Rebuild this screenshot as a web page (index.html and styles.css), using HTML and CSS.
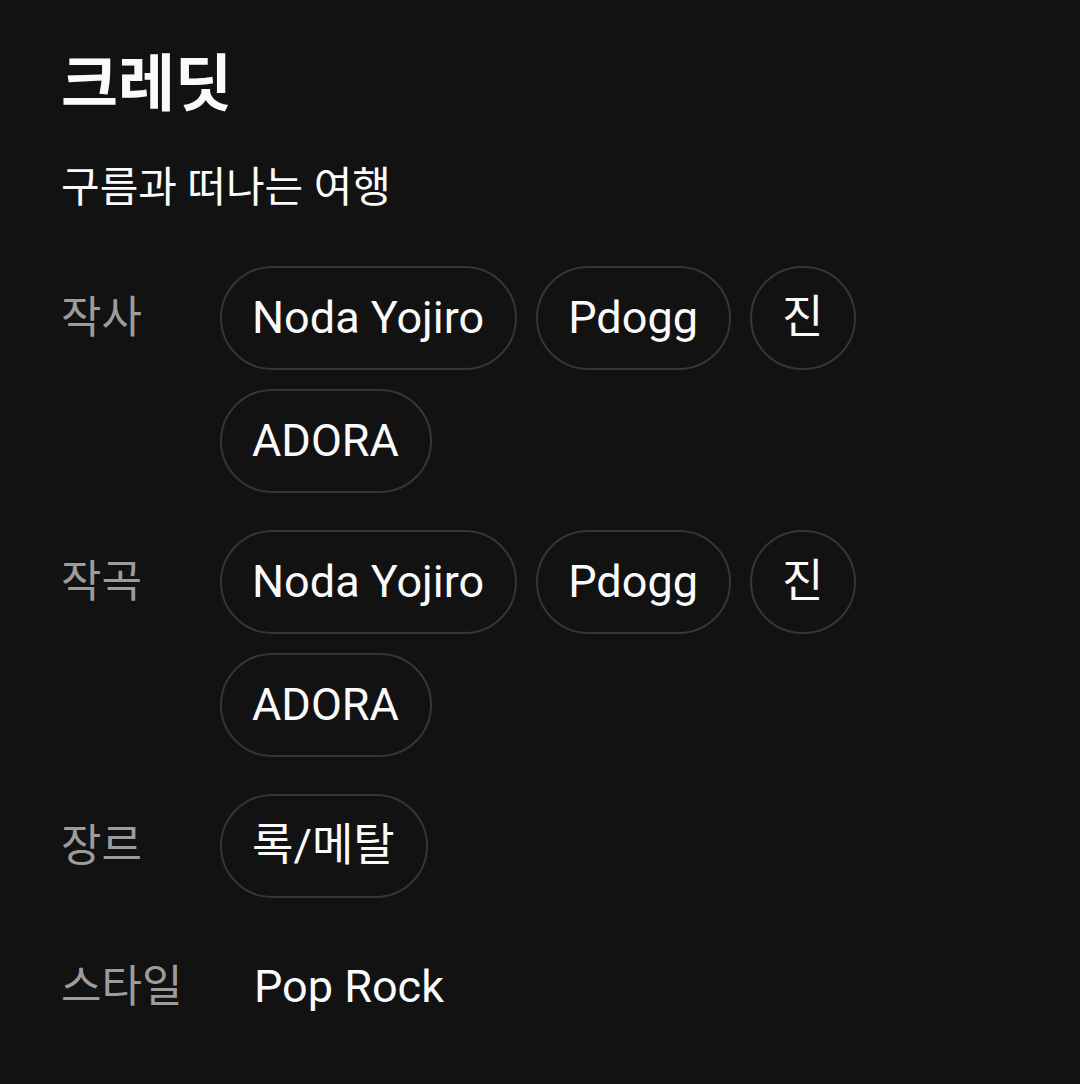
FILE: index.html
```html
<!DOCTYPE html>
<html lang="ko">
<head>
    <meta charset="UTF-8">
    <meta name="viewport" content="width=device-width, initial-scale=1.0">
    <title>크레딧</title>
    <link rel="stylesheet" href="styles.css">
</head>
<body>
    <div class="credits">
        <h1 class="title">크레딧</h1>
        <p class="song">구름과 떠나는 여행</p>

        <div class="credit-row">
            <div class="label">작사</div>
            <div class="chips">
                <span class="chip">Noda Yojiro</span>
                <span class="chip">Pdogg</span>
                <span class="chip">진</span>
                <span class="chip">ADORA</span>
            </div>
        </div>

        <div class="credit-row">
            <div class="label">작곡</div>
            <div class="chips">
                <span class="chip">Noda Yojiro</span>
                <span class="chip">Pdogg</span>
                <span class="chip">진</span>
                <span class="chip">ADORA</span>
            </div>
        </div>

        <div class="credit-row">
            <div class="label">장르</div>
            <div class="chips">
                <span class="chip">록/메탈</span>
            </div>
        </div>

        <div class="credit-row">
            <div class="label">스타일</div>
            <div class="chips">
                <span class="plain">Pop Rock</span>
            </div>
        </div>
    </div>
</body>
</html>
```

FILE: styles.css
```css
html, body {
    margin: 0;
    padding: 0;
    background-color: #121212;
}

body {
    font-family: Roboto, "Noto Sans CJK KR", sans-serif;
    color: #fafafa;
}

.credits {
    padding: 43px 61px 0 61px;
}

.title {
    margin: 0;
    font-size: 62px;
    font-weight: 700;
    line-height: 84px;
}

.song {
    margin: 33px 0 0 0;
    font-size: 42px;
    line-height: 56px;
}

.credit-row {
    display: flex;
    align-items: flex-start;
    margin-top: 37px;
}

.song + .credit-row {
    margin-top: 50px;
}

.label {
    width: 159px;
    flex-shrink: 0;
    font-size: 44px;
    line-height: 104px;
    color: #9c9c9c;
}

.chips {
    display: flex;
    flex-wrap: wrap;
    gap: 19px 19px;
    max-width: 800px;
}

.chip {
    box-sizing: border-box;
    height: 104px;
    padding: 0 31px 0 30px;
    border: 2px solid #363636;
    border-radius: 52px;
    font-size: 45px;
    line-height: 100px;
    white-space: nowrap;
}

.plain {
    height: 104px;
    padding-left: 34px;
    font-size: 45px;
    line-height: 104px;
}
```
